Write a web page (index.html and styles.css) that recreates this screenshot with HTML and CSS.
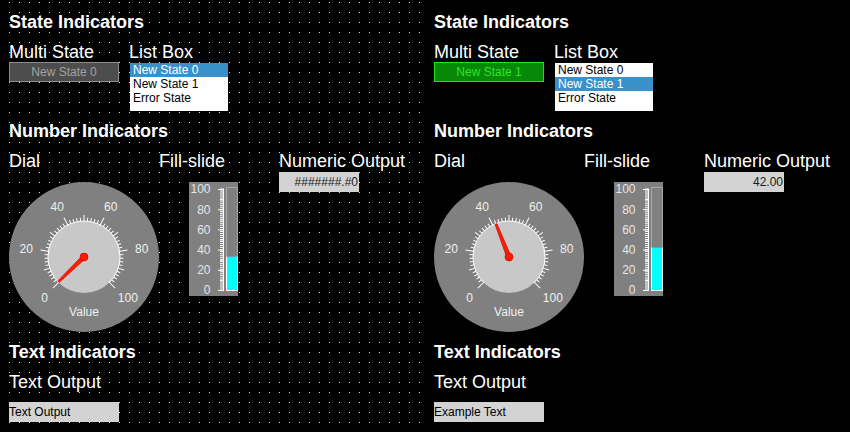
FILE: index.html
```html
<!DOCTYPE html>
<html lang="en">
<head>
<meta charset="utf-8">
<title>Indicators</title>
<link rel="stylesheet" href="styles.css">
</head>
<body>
<div class="app">
  <section class="panel panel-design">
    <div class="group">
      <h2 class="group-title">State Indicators</h2>
      <div class="row">
        <div class="col col-120">
          <div class="label">Multi State</div>
          <div class="multistate">New State 0</div>
        </div>
        <div class="col">
          <div class="label">List Box</div>
          <ul class="listbox">
            <li class="selected">New State 0</li>
            <li>New State 1</li>
            <li>Error State</li>
          </ul>
        </div>
      </div>
    </div>
    <div class="group">
      <h2 class="group-title">Number Indicators</h2>
      <div class="row">
        <div class="col col-150">
          <div class="label">Dial</div>
          <svg class="dial" viewBox="0 0 150 150" width="150" height="150">
            <circle cx="75" cy="75" r="75" class="dial-face"/>
            <circle cx="75" cy="75" r="36" class="dial-inner"/>
            <g id="dial-ticks" class="dial-ticks">
              <path d="M49.54 100.46 A36 36 0 1 1 100.46 100.46" fill="none"/>
              <line x1="75" y1="40" x2="75" y2="31" transform="rotate(-135 75 75)"/>
              <line x1="75" y1="40" x2="75" y2="31" transform="rotate(-81 75 75)"/>
              <line x1="75" y1="40" x2="75" y2="31" transform="rotate(-27 75 75)"/>
              <line x1="75" y1="40" x2="75" y2="31" transform="rotate(27 75 75)"/>
              <line x1="75" y1="40" x2="75" y2="31" transform="rotate(81 75 75)"/>
              <line x1="75" y1="40" x2="75" y2="31" transform="rotate(135 75 75)"/>
              <line x1="75" y1="39" x2="75" y2="33" transform="rotate(-108 75 75)"/>
              <line x1="75" y1="39" x2="75" y2="33" transform="rotate(-54 75 75)"/>
              <line x1="75" y1="39" x2="75" y2="33" transform="rotate(0 75 75)"/>
              <line x1="75" y1="39" x2="75" y2="33" transform="rotate(54 75 75)"/>
              <line x1="75" y1="39" x2="75" y2="33" transform="rotate(108 75 75)"/>
              <line x1="75" y1="39" x2="75" y2="35.5" transform="rotate(-129.6 75 75)"/>
              <line x1="75" y1="39" x2="75" y2="35.5" transform="rotate(-124.2 75 75)"/>
              <line x1="75" y1="39" x2="75" y2="35.5" transform="rotate(-118.8 75 75)"/>
              <line x1="75" y1="39" x2="75" y2="35.5" transform="rotate(-113.4 75 75)"/>
              <line x1="75" y1="39" x2="75" y2="35.5" transform="rotate(-102.6 75 75)"/>
              <line x1="75" y1="39" x2="75" y2="35.5" transform="rotate(-97.2 75 75)"/>
              <line x1="75" y1="39" x2="75" y2="35.5" transform="rotate(-91.8 75 75)"/>
              <line x1="75" y1="39" x2="75" y2="35.5" transform="rotate(-86.4 75 75)"/>
              <line x1="75" y1="39" x2="75" y2="35.5" transform="rotate(-75.6 75 75)"/>
              <line x1="75" y1="39" x2="75" y2="35.5" transform="rotate(-70.2 75 75)"/>
              <line x1="75" y1="39" x2="75" y2="35.5" transform="rotate(-64.8 75 75)"/>
              <line x1="75" y1="39" x2="75" y2="35.5" transform="rotate(-59.4 75 75)"/>
              <line x1="75" y1="39" x2="75" y2="35.5" transform="rotate(-48.6 75 75)"/>
              <line x1="75" y1="39" x2="75" y2="35.5" transform="rotate(-43.2 75 75)"/>
              <line x1="75" y1="39" x2="75" y2="35.5" transform="rotate(-37.8 75 75)"/>
              <line x1="75" y1="39" x2="75" y2="35.5" transform="rotate(-32.4 75 75)"/>
              <line x1="75" y1="39" x2="75" y2="35.5" transform="rotate(-21.6 75 75)"/>
              <line x1="75" y1="39" x2="75" y2="35.5" transform="rotate(-16.2 75 75)"/>
              <line x1="75" y1="39" x2="75" y2="35.5" transform="rotate(-10.8 75 75)"/>
              <line x1="75" y1="39" x2="75" y2="35.5" transform="rotate(-5.4 75 75)"/>
              <line x1="75" y1="39" x2="75" y2="35.5" transform="rotate(5.4 75 75)"/>
              <line x1="75" y1="39" x2="75" y2="35.5" transform="rotate(10.8 75 75)"/>
              <line x1="75" y1="39" x2="75" y2="35.5" transform="rotate(16.2 75 75)"/>
              <line x1="75" y1="39" x2="75" y2="35.5" transform="rotate(21.6 75 75)"/>
              <line x1="75" y1="39" x2="75" y2="35.5" transform="rotate(32.4 75 75)"/>
              <line x1="75" y1="39" x2="75" y2="35.5" transform="rotate(37.8 75 75)"/>
              <line x1="75" y1="39" x2="75" y2="35.5" transform="rotate(43.2 75 75)"/>
              <line x1="75" y1="39" x2="75" y2="35.5" transform="rotate(48.6 75 75)"/>
              <line x1="75" y1="39" x2="75" y2="35.5" transform="rotate(59.4 75 75)"/>
              <line x1="75" y1="39" x2="75" y2="35.5" transform="rotate(64.8 75 75)"/>
              <line x1="75" y1="39" x2="75" y2="35.5" transform="rotate(70.2 75 75)"/>
              <line x1="75" y1="39" x2="75" y2="35.5" transform="rotate(75.6 75 75)"/>
              <line x1="75" y1="39" x2="75" y2="35.5" transform="rotate(86.4 75 75)"/>
              <line x1="75" y1="39" x2="75" y2="35.5" transform="rotate(91.8 75 75)"/>
              <line x1="75" y1="39" x2="75" y2="35.5" transform="rotate(97.2 75 75)"/>
              <line x1="75" y1="39" x2="75" y2="35.5" transform="rotate(102.6 75 75)"/>
              <line x1="75" y1="39" x2="75" y2="35.5" transform="rotate(113.4 75 75)"/>
              <line x1="75" y1="39" x2="75" y2="35.5" transform="rotate(118.8 75 75)"/>
              <line x1="75" y1="39" x2="75" y2="35.5" transform="rotate(124.2 75 75)"/>
              <line x1="75" y1="39" x2="75" y2="35.5" transform="rotate(129.6 75 75)"/>
            </g>
            <g class="dial-labels">
              <text x="35.7" y="120.3">0</text>
              <text x="17.2" y="71.3">20</text>
              <text x="48.3" y="29.3">40</text>
              <text x="101.7" y="29.3">60</text>
              <text x="132.7" y="71.3">80</text>
              <text x="118.8" y="120.3">100</text>
              <text x="75" y="134.3">Value</text>
            </g>
            <g class="needle" transform="rotate(-134 75 75)">
              <polygon points="72.8,75 77.2,75 76,39.5 74,39.5"/>
            </g>
            <circle cx="75" cy="75" r="4" class="needle-hub"/>
          </svg>
        </div>
        <div class="col col-120">
          <div class="label">Fill-slide</div>
          <svg class="fillslide" viewBox="0 0 49 114" width="49" height="114">
            <rect x="0" y="0" width="49" height="114" class="fs-bg"/>
            <g id="fs-scale">
              <g class="fs-labels">
                <text x="21.5" y="11.3">100</text>
                <text x="21.5" y="31.5">80</text>
                <text x="21.5" y="51.7">60</text>
                <text x="21.5" y="71.9">40</text>
                <text x="21.5" y="92.1">20</text>
                <text x="21.5" y="112.3">0</text>
              </g>
              <g class="fs-ticks">
                <path d="M34.5 6.5 V108.5"/>
                <path d="M32.5 108.5 V6.5" class="fs-minor"/>
                <path d="M29 108.5 H35 M29 88.3 H35 M29 68.1 H35 M29 47.9 H35 M29 27.7 H35 M29 7.5 H35"/>
                <path d="M31 98.4 H35 M31 78.2 H35 M31 58 H35 M31 37.8 H35 M31 17.6 H35"/>
              </g>
            </g>
            <path d="M37.5 109 V5.5 H48.5 V109" class="fs-frame"/>
            <rect x="38" y="74.7" width="10" height="33.8" class="fs-fill"/>
            <path d="M37.5 74.7 V108.5 H48.5 V74.7" class="fs-frame-lit"/>
          </svg>
        </div>
        <div class="col">
          <div class="label">Numeric Output</div>
          <div class="numeric">#######.#0</div>
        </div>
      </div>
    </div>
    <div class="group">
      <h2 class="group-title">Text Indicators</h2>
      <div class="row">
        <div class="col">
          <div class="label">Text Output</div>
          <div class="textout">Text Output</div>
        </div>
      </div>
    </div>
  </section>

  <section class="panel panel-run">
    <div class="group">
      <h2 class="group-title">State Indicators</h2>
      <div class="row">
        <div class="col col-120">
          <div class="label">Multi State</div>
          <div class="multistate on">New State 1</div>
        </div>
        <div class="col">
          <div class="label">List Box</div>
          <ul class="listbox">
            <li>New State 0</li>
            <li class="selected">New State 1</li>
            <li>Error State</li>
          </ul>
        </div>
      </div>
    </div>
    <div class="group">
      <h2 class="group-title">Number Indicators</h2>
      <div class="row">
        <div class="col col-150">
          <div class="label">Dial</div>
          <svg class="dial" viewBox="0 0 150 150" width="150" height="150">
            <circle cx="75" cy="75" r="75" class="dial-face"/>
            <circle cx="75" cy="75" r="36" class="dial-inner"/>
            <use href="#dial-ticks"/>
            <g class="dial-labels">
              <text x="35.7" y="120.3">0</text>
              <text x="17.2" y="71.3">20</text>
              <text x="48.3" y="29.3">40</text>
              <text x="101.7" y="29.3">60</text>
              <text x="132.7" y="71.3">80</text>
              <text x="118.8" y="120.3">100</text>
              <text x="75" y="134.3">Value</text>
            </g>
            <g class="needle" transform="rotate(-21.6 75 75)">
              <polygon points="72.8,75 77.2,75 76,39.5 74,39.5"/>
            </g>
            <circle cx="75" cy="75" r="4" class="needle-hub"/>
          </svg>
        </div>
        <div class="col col-120">
          <div class="label">Fill-slide</div>
          <svg class="fillslide" viewBox="0 0 49 114" width="49" height="114">
            <rect x="0" y="0" width="49" height="114" class="fs-bg"/>
            <g class="fs-labels">
              <text x="21.5" y="11.3">100</text>
              <text x="21.5" y="31.5">80</text>
              <text x="21.5" y="51.7">60</text>
              <text x="21.5" y="71.9">40</text>
              <text x="21.5" y="92.1">20</text>
              <text x="21.5" y="112.3">0</text>
            </g>
            <g class="fs-ticks">
              <path d="M34.5 6.5 V108.5"/>
              <path d="M32.5 108.5 V6.5" class="fs-minor"/>
              <path d="M29 108.5 H35 M29 88.3 H35 M29 68.1 H35 M29 47.9 H35 M29 27.7 H35 M29 7.5 H35"/>
              <path d="M31 98.4 H35 M31 78.2 H35 M31 58 H35 M31 37.8 H35 M31 17.6 H35"/>
            </g>
            <path d="M37.5 109 V5.5 H48.5 V109" class="fs-frame"/>
            <rect x="38" y="65.6" width="10" height="42.9" class="fs-fill"/>
            <path d="M37.5 65.6 V108.5 H48.5 V65.6" class="fs-frame-lit"/>
          </svg>
        </div>
        <div class="col">
          <div class="label">Numeric Output</div>
          <div class="numeric">42.00</div>
        </div>
      </div>
    </div>
    <div class="group">
      <h2 class="group-title">Text Indicators</h2>
      <div class="row">
        <div class="col">
          <div class="label">Text Output</div>
          <div class="textout">Example Text</div>
        </div>
      </div>
    </div>
  </section>
</div>
</body>
</html>
```

FILE: styles.css
```css
* {
  box-sizing: border-box;
}

html,
body {
  margin: 0;
  padding: 0;
}

body {
  background: #000;
  color: #fff;
  font-family: "Liberation Sans", Arial, sans-serif;
  width: 850px;
  height: 432px;
  overflow: hidden;
}

.app {
  display: flex;
  width: 850px;
  height: 432px;
}

.panel {
  width: 425px;
  height: 432px;
  flex: 0 0 425px;
  padding: 12px 0 0 9px;
  background-color: #000;
}

.panel-design {
  background-color: #e2e2e2;
  background-image:
    linear-gradient(to right, #000 9px, transparent 9px, transparent 10px),
    linear-gradient(to bottom, #000 2px, transparent 2px, transparent 3px, #000 3px);
  background-size: 10px 10px;
}

.group + .group {
  margin-top: 10px;
}

.group-title {
  margin: 0;
  font-size: 18px;
  font-weight: bold;
  line-height: 20px;
}

.row {
  display: flex;
  margin-top: 11px;
}

.col-120 {
  width: 120px;
  flex: 0 0 120px;
}

.col-150 {
  width: 150px;
  flex: 0 0 150px;
}

.label {
  font-size: 18px;
  line-height: 19px;
  white-space: nowrap;
}

/* Multi state */
.multistate {
  width: 110px;
  height: 20px;
  border: 1px solid #8c8c8c;
  background: #4d4d4d;
  color: #a3a3a3;
  font-size: 12px;
  line-height: 18px;
  text-align: center;
}

.multistate.on {
  background: #078807;
  border-color: #1fe01f;
  color: #2ee32e;
}

/* List box */
.listbox {
  list-style: none;
  margin: 1px 0 0 1px;
  padding: 0;
  width: 98px;
  height: 48px;
  background: #fff;
  color: #000;
  font-size: 12px;
}

.listbox li {
  height: 14px;
  line-height: 14px;
  padding-left: 3px;
  white-space: nowrap;
}

.listbox li.selected {
  background: #3a90c8;
  color: #fff;
}

/* Dial */
.dial {
  display: block;
  margin-top: 11px;
}

.dial-face {
  fill: #808080;
}

.dial-inner {
  fill: #c8c8c8;
}

.dial-ticks line,
.dial-ticks path {
  stroke: #fff;
  stroke-width: 1;
}

.dial-labels text {
  font-family: "Liberation Sans", Arial, sans-serif;
  font-size: 12px;
  fill: #f0f0f0;
  text-anchor: middle;
}

.needle polygon {
  fill: #ff1f00;
  stroke: #d00000;
  stroke-width: 0.6;
  stroke-linejoin: round;
}

.needle-hub {
  fill: #ff1a00;
  stroke: #c00000;
  stroke-width: 0.6;
}

/* Fill slide */
.fillslide {
  display: block;
  margin: 11px 0 0 30px;
}

.fs-bg {
  fill: #808080;
}

.fs-labels text {
  font-family: "Liberation Sans", Arial, sans-serif;
  font-size: 12px;
  fill: #e6e6e6;
  text-anchor: end;
}

.fs-ticks path {
  stroke: #fff;
  stroke-width: 1;
  fill: none;
}

.fs-ticks .fs-minor {
  stroke-width: 3;
  stroke-dasharray: 1 1.02;
}

.fs-frame {
  fill: none;
  stroke: #a8a8a8;
  stroke-width: 1;
}

.fs-fill {
  fill: #00ffff;
}

.fs-frame-lit {
  fill: none;
  stroke: #fff;
  stroke-width: 1;
}

/* Numeric output */
.numeric {
  width: 80px;
  height: 20px;
  margin-top: 1px;
  padding-right: 1px;
  background: #d3d3d3;
  color: #1a1a1a;
  font-size: 12px;
  line-height: 20px;
  text-align: right;
  white-space: nowrap;
}

/* Text output */
.textout {
  width: 110px;
  height: 20px;
  margin-top: 10px;
  background: #d3d3d3;
  color: #000;
  font-size: 12px;
  line-height: 20px;
  white-space: nowrap;
}
```
